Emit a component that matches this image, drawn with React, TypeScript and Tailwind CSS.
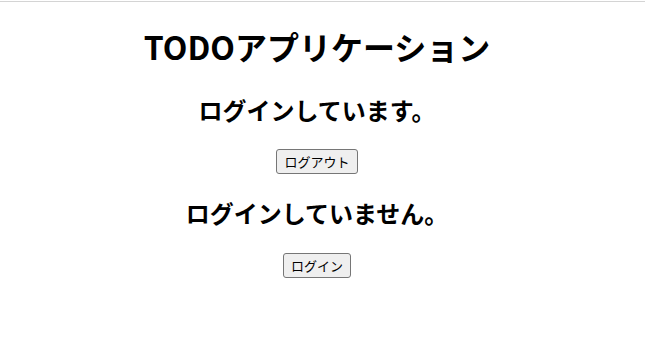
const font = {
  fontFamily: '"Noto Sans CJK JP", "Noto Sans", sans-serif',
};

const LoginStatus = ({ loggedIn }: { loggedIn: boolean }) => {
  return (
    <div className="flex flex-col items-center">
      <h2
        className={
          loggedIn
            ? "mt-[23px] mb-[22px] text-[24px] leading-[35px] font-bold text-black"
            : "mt-[21px] mb-[23px] text-[24px] leading-[35px] font-bold text-black"
        }
      >
        {loggedIn ? "ログインしています。" : "ログインしていません。"}
      </h2>
      <button className="h-[25px] rounded-[3px] border border-[#767676] bg-[#efefef] px-[7px] text-[13px] leading-[20px] text-black">
        {loggedIn ? "ログアウト" : "ログイン"}
      </button>
    </div>
  );
};

export default function App() {
  return (
    <div className="min-h-[362px] bg-white" style={font}>
      <div className="mt-px border-t border-[#d4d4d4]" />
      <div className="flex w-[634px] flex-col items-center">
        <h1 className="mt-[21px] mb-0 text-[32px] leading-[46px] font-bold text-black">
          TODOアプリケーション
        </h1>
        <LoginStatus loggedIn={true} />
        <LoginStatus loggedIn={false} />
      </div>
    </div>
  );
}
